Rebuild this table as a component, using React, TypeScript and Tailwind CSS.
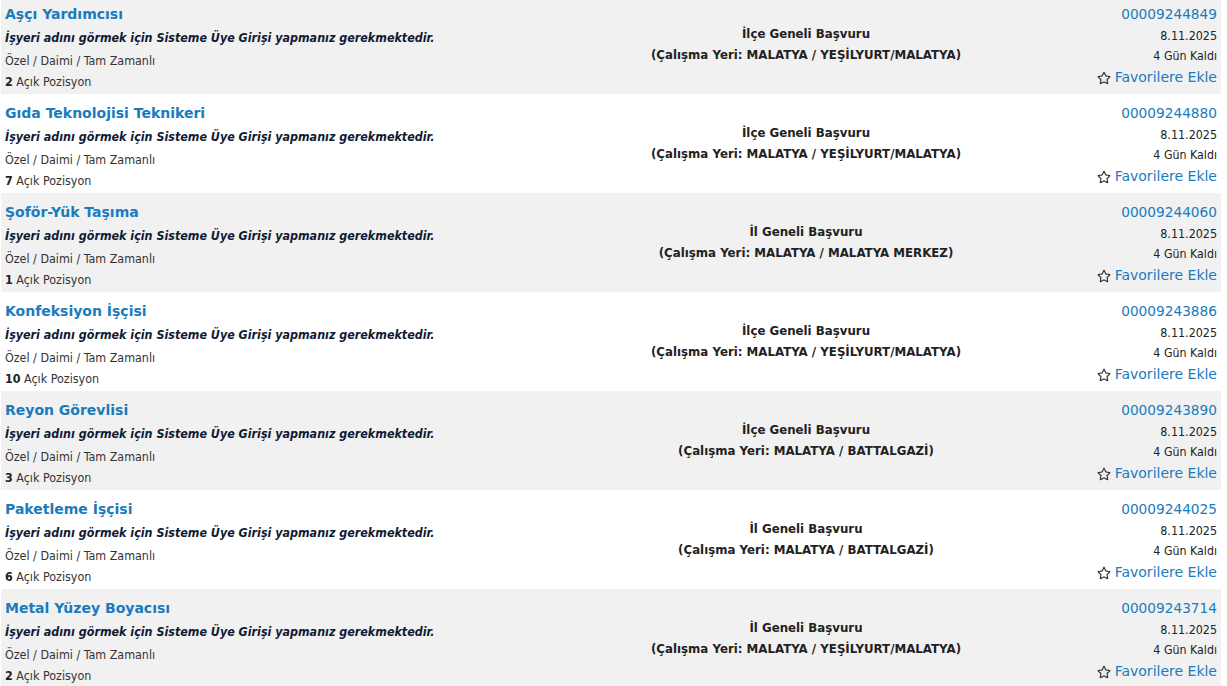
import React from "react";
import { FaRegStar } from "react-icons/fa";

type Job = {
  title: string;
  count: number;
  scope: string;
  place: string;
  no: string;
};

const jobs: Job[] = [
  { title: "Aşçı Yardımcısı", count: 2, scope: "İlçe Geneli Başvuru", place: "(Çalışma Yeri: MALATYA / YEŞİLYURT/MALATYA)", no: "00009244849" },
  { title: "Gıda Teknolojisi Teknikeri", count: 7, scope: "İlçe Geneli Başvuru", place: "(Çalışma Yeri: MALATYA / YEŞİLYURT/MALATYA)", no: "00009244880" },
  { title: "Şoför-Yük Taşıma", count: 1, scope: "İl Geneli Başvuru", place: "(Çalışma Yeri: MALATYA / MALATYA MERKEZ)", no: "00009244060" },
  { title: "Konfeksiyon İşçisi", count: 10, scope: "İlçe Geneli Başvuru", place: "(Çalışma Yeri: MALATYA / YEŞİLYURT/MALATYA)", no: "00009243886" },
  { title: "Reyon Görevlisi", count: 3, scope: "İlçe Geneli Başvuru", place: "(Çalışma Yeri: MALATYA / BATTALGAZİ)", no: "00009243890" },
  { title: "Paketleme İşçisi", count: 6, scope: "İl Geneli Başvuru", place: "(Çalışma Yeri: MALATYA / BATTALGAZİ)", no: "00009244025" },
  { title: "Metal Yüzey Boyacısı", count: 2, scope: "İl Geneli Başvuru", place: "(Çalışma Yeri: MALATYA / YEŞİLYURT/MALATYA)", no: "00009243714" },
];

const cond = { fontFamily: '"DejaVu Sans Condensed", "DejaVu Sans", sans-serif' };

export default function App() {
  return (
    <div
      className="w-[1227px] h-[686px] overflow-hidden bg-white"
      style={{ fontFamily: '"DejaVu Sans", Verdana, sans-serif' }}
    >
      <div className="-mt-[5px] ml-[1px] w-[1220px] flex flex-col">
        {jobs.map((j, i) => (
          <div
            key={j.no}
            className={`flex h-[99px] ${i % 2 === 0 ? "bg-[#f1f1f1]" : "bg-white"}`}
          >
            <div className="w-[560px] pl-[4px] pt-[7px] flex flex-col">
              <div className="h-[24px] leading-[24px] text-[14px] font-bold text-[#1a7bbd] whitespace-nowrap">
                {j.title}
              </div>
              <div
                className="h-[24px] leading-[24px] text-[12.4px] font-bold italic text-[#111a33] whitespace-nowrap"
                style={cond}
              >
                İşyeri adını görmek için Sisteme Üye Girişi yapmanız gerekmektedir.
              </div>
              <div className="h-[21px] leading-[21px] text-[12.4px] text-[#333] whitespace-nowrap" style={cond}>
                Özel / Daimi / Tam Zamanlı
              </div>
              <div className="h-[21px] leading-[21px] text-[12.4px] text-[#333] whitespace-nowrap" style={cond}>
                <span className="font-bold text-[#222]">{j.count}</span> Açık Pozisyon
              </div>
            </div>
            <div className="w-[490px] pt-[29px] flex flex-col items-center">
              <div className="h-[21px] leading-[21px] text-[11.8px] font-bold text-[#222] whitespace-nowrap">
                {j.scope}
              </div>
              <div className="h-[21px] leading-[21px] text-[11.8px] font-bold text-[#222] whitespace-nowrap">
                {j.place}
              </div>
            </div>
            <div className="flex-1 pr-[4px] pt-[8px] flex flex-col items-end">
              <div className="h-[22px] leading-[22px] text-[13.7px] text-[#1a7bbd] whitespace-nowrap">
                {j.no}
              </div>
              <div className="h-[21px] leading-[21px] text-[12.4px] text-[#222] whitespace-nowrap" style={cond}>
                8.11.2025
              </div>
              <div className="h-[21px] leading-[21px] text-[12.3px] text-[#222] whitespace-nowrap" style={cond}>
                4 Gün Kaldı
              </div>
              <div className="h-[21px] leading-[21px] text-[14px] text-[#1a7bbd] whitespace-nowrap flex items-center gap-[4px]">
                <FaRegStar className="text-[#333] w-[14px] h-[14px]" />
                <span>Favorilere Ekle</span>
              </div>
            </div>
          </div>
        ))}
      </div>
    </div>
  );
}
